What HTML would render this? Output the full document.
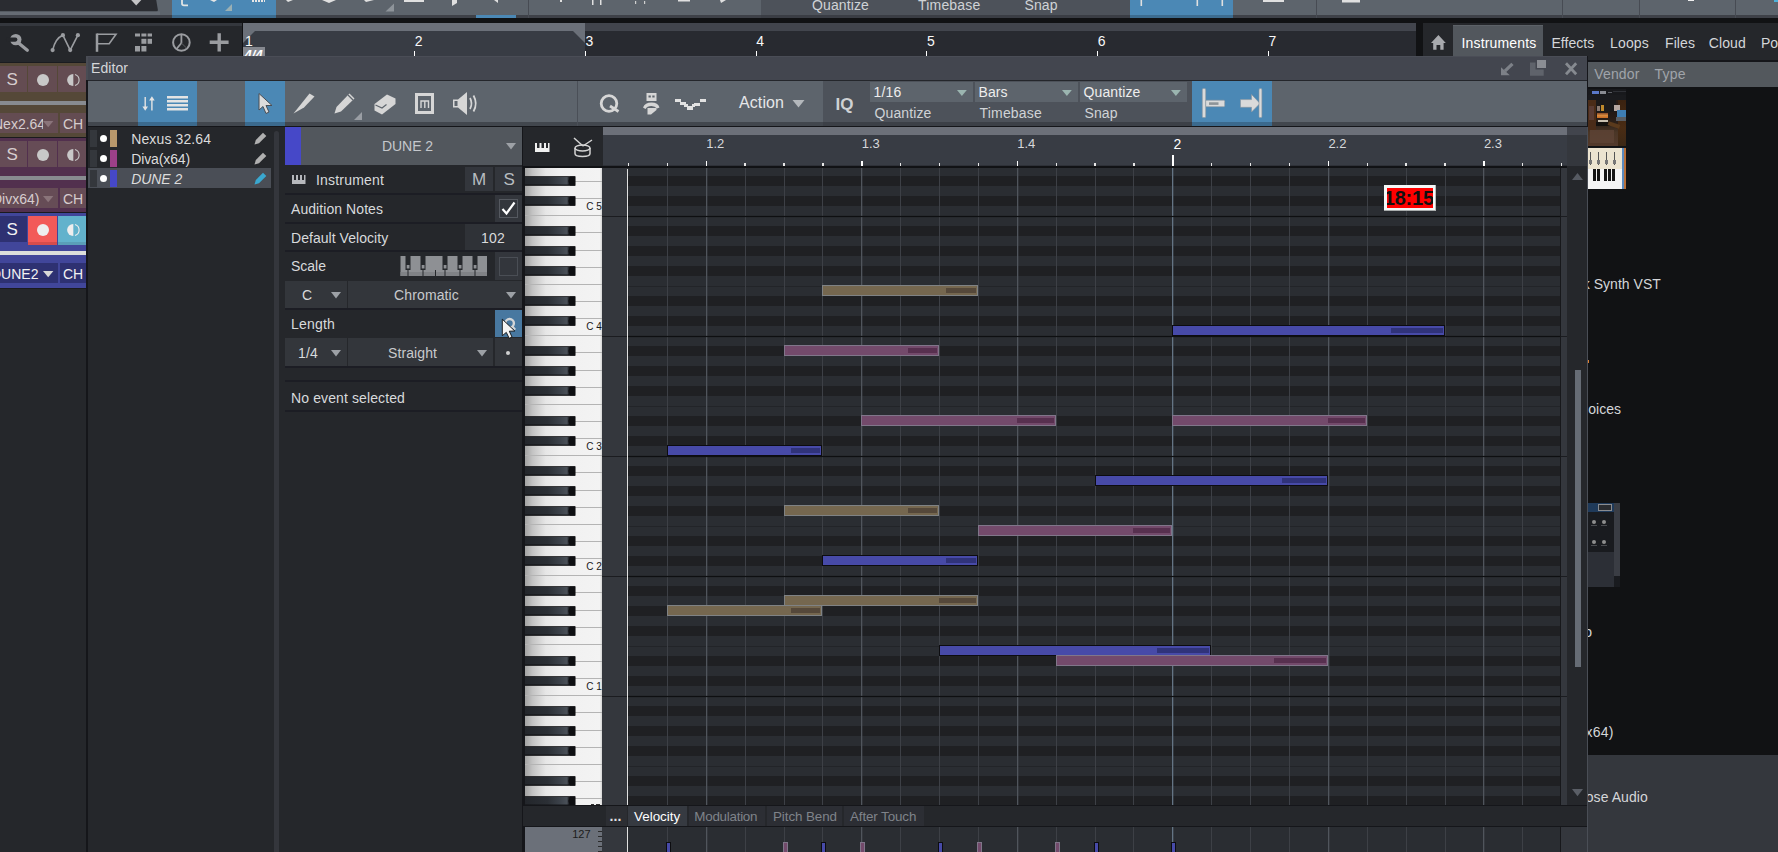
<!DOCTYPE html>
<html><head><meta charset="utf-8"><title>Editor</title><style>
html,body{margin:0;padding:0;background:#25272b;}
body{width:1778px;height:852px;overflow:hidden;position:relative;font-family:"Liberation Sans",sans-serif;}
div{position:absolute;box-sizing:border-box;}
.t{white-space:nowrap;line-height:1;}
svg{position:absolute;overflow:visible;}
</style></head><body>
<!-- top bar -->
<div style="left:0px;top:0px;width:1778px;height:18px;background:#5d646c;"></div><div style="left:0px;top:15px;width:1778px;height:3px;background:#3e4148;"></div><svg style="left:0;top:0" width="170" height="18"><path d="M0 0H156.200L157.900 10Q158 11.500 156 11.500H0Z" fill="#2a2c31"/><path d="M131.200 0H141.300L136.200 5.600Z" fill="#c4c4c6"/><rect x="0" y="11.500" width="160" height="3.500" fill="#666c74"/></svg><div style="left:172px;top:0px;width:104px;height:18px;background:#4b88b5;"></div><div style="left:172px;top:15px;width:104px;height:3px;background:#3c6c90;"></div><svg style="left:172px;top:0" width="110" height="18"><path d="M10 0V3.500Q10 5.300 12 5.300H16" stroke="#e0e4e4" stroke-width="1.800" fill="none"/><path d="M38 0L42 2L45 0Z" fill="#e6e6e6"/><path d="M60 4V11H53Z" fill="#9bb0b4"/><path d="M80 1H93" stroke="#e6e6e6" stroke-width="2" stroke-dasharray="2 1"/></svg><svg style="left:276px;top:0" width="260" height="18"><path d="M10 0L17 0L12 2Z" fill="#e0e0e0"/><path d="M46 0H60L53 3Z" fill="#e0e0e0"/><path d="M88 0H98L90 2Z" fill="#e0e0e0"/><path d="M118 3.500V11.500H109.500Z" fill="#8e949a"/><rect x="128" y="0" width="20" height="2" fill="#e0e0e0"/><path d="M176 0V6L181 3V0Z" fill="#e0e0e0"/><path d="M218 0L222 3V0Z" fill="#e0e0e0"/></svg><div style="left:476px;top:15px;width:40px;height:3px;background:#4b88b5;"></div><div style="left:528px;top:0px;width:1px;height:18px;background:#474b53;"></div><svg style="left:530px;top:0" width="240" height="18"><rect x="30" y="0" width="2" height="2" fill="#e0e0e0"/><rect x="62" y="0" width="1.5" height="5" fill="#e0e0e0"/><rect x="70" y="0" width="1.5" height="5" fill="#e0e0e0"/><rect x="105" y="1" width="1.2" height="3" fill="#d0d0d0"/><rect x="114" y="1" width="1.2" height="3" fill="#d0d0d0"/><rect x="148" y="0" width="12" height="1.5" fill="#e0e0e0"/><path d="M190 0H196L191 3Z" fill="#e0e0e0"/></svg><div style="left:761px;top:0px;width:369px;height:18px;background:#4d525a;"></div><div style="left:761px;top:15px;width:369px;height:3px;background:#3a3d44;"></div><div class="t" style="left:812px;top:-2.2px;font-size:14px;color:#d0d3d6;letter-spacing:0.121px;">Quantize</div><div class="t" style="left:918px;top:-2.2px;font-size:14px;color:#d0d3d6;letter-spacing:0.191px;">Timebase</div><div class="t" style="left:1024.5px;top:-2.2px;font-size:14px;color:#d0d3d6;letter-spacing:0.076px;">Snap</div><div style="left:1130px;top:0px;width:103px;height:18px;background:#4b88b5;"></div><div style="left:1130px;top:15px;width:103px;height:3px;background:#3c6c90;"></div><svg style="left:1130px;top:0" width="110" height="18"><rect x="10.5" y="0" width="1.6" height="6" fill="#e0e0e0"/><rect x="66.5" y="0" width="1.6" height="6" fill="#e0e0e0"/><rect x="91.5" y="0" width="1.6" height="6" fill="#e0e0e0"/></svg><svg style="left:1233px;top:0" width="140" height="18"><rect x="30" y="0" width="21" height="2" fill="#e0e0e0"/><rect x="109" y="0" width="18" height="2.5" fill="#e0e0e0"/></svg><div style="left:1316px;top:0px;width:1px;height:18px;background:#474b53;"></div><div style="left:1562px;top:0px;width:1px;height:18px;background:#474b53;"></div><div style="left:1639px;top:0px;width:1px;height:18px;background:#474b53;"></div><div style="left:1735px;top:0px;width:1px;height:18px;background:#474b53;"></div><div style="left:1688px;top:0px;width:5.5px;height:1px;background:#f0f0f0;"></div><div style="left:1774px;top:0px;width:4px;height:2px;background:#4fb0d8;"></div><div style="left:0px;top:18px;width:1778px;height:5px;background:#111214;"></div>
<!-- left tool strip -->
<div style="left:0px;top:23px;width:243px;height:40px;background:#25272b;"></div><div style="left:242px;top:23px;width:1px;height:34px;background:#111214;"></div><div style="left:0px;top:23px;width:242px;height:2.5px;background:#34373d;"></div><svg style="left:0;top:23px" width="243" height="40" fill="none" stroke="#9a9ca0">
<circle cx="15.800" cy="16.600" r="5.700" fill="#9a9ca0" stroke="none"/>
<path d="M8 16.600H15.300" stroke="#25272b" stroke-width="4.200" stroke-linecap="round"/>
<path d="M18.800 20.300L27.300 27.200" stroke-width="3.300" stroke-linecap="round"/>
<path d="M52.600 27.100Q55.500 15 62.900 12.200L70.200 27.100L77.900 12.200" stroke-width="1.600"/>
<circle cx="52.600" cy="27.100" r="2.100" fill="#9a9ca0" stroke="none"/><circle cx="62.900" cy="12.200" r="2.100" fill="#9a9ca0" stroke="none"/><circle cx="70.200" cy="27.100" r="2.100" fill="#9a9ca0" stroke="none"/><circle cx="77.900" cy="12.200" r="2.100" fill="#9a9ca0" stroke="none"/>
<path d="M97 10.500V28.800" stroke-width="2.500"/><path d="M97 11.300H116L109.200 20.800H97" stroke-width="1.600"/>
<g stroke="none" fill="#9a9ca0"><rect x="135" y="10.500" width="5" height="3"/><rect x="141.400" y="10.500" width="5" height="3"/><rect x="147.600" y="10.500" width="4.400" height="3"/><rect x="141.400" y="15.800" width="5" height="5"/><rect x="147.600" y="15.800" width="4.400" height="5"/><rect x="135" y="23" width="5" height="5.500"/><rect x="141.400" y="23" width="5" height="5.500"/></g>
<circle cx="181.400" cy="19.500" r="8.300" stroke-width="2"/><path d="M181.400 11V20" stroke-width="1.800"/><path d="M181.400 20L176.500 26" stroke-width="1.800"/><path d="M181.400 20L186.500 25" stroke-width="0.800" stroke="#6a6c70"/>
<path d="M209.700 19.300H228.600M219.200 10.200V28.500" stroke-width="3.400"/>
</svg>
<!-- ruler -->
<div style="left:243px;top:23px;width:1173px;height:34px;background:#282a30;"></div><div style="left:243px;top:23px;width:1173px;height:8px;background:#42454d;"></div><div style="left:243px;top:31px;width:342px;height:25px;background:#383c44;"></div><div style="left:243px;top:23px;width:342px;height:8px;background:#6b7079;"></div><svg style="left:243px;top:23px" width="1173" height="34"><path d="M0 8H12L0 20Z" fill="#6b7079"/><path d="M330 8H342V20Z" fill="#6b7079"/></svg><div class="t" style="left:244.9px;top:34px;font-size:14px;color:#f8f8f8;">1</div><div style="left:414px;top:51px;width:1px;height:5px;background:#ffffff;"></div><div class="t" style="left:414.85px;top:34px;font-size:14px;color:#f8f8f8;">2</div><div style="left:585px;top:51px;width:1px;height:5px;background:#ffffff;"></div><div class="t" style="left:585.5999999999999px;top:34px;font-size:14px;color:#f8f8f8;">3</div><div style="left:756px;top:51px;width:1px;height:5px;background:#ffffff;"></div><div class="t" style="left:756.3499999999999px;top:34px;font-size:14px;color:#f8f8f8;">4</div><div style="left:926px;top:51px;width:1px;height:5px;background:#ffffff;"></div><div class="t" style="left:927.0999999999999px;top:34px;font-size:14px;color:#f8f8f8;">5</div><div style="left:1097px;top:51px;width:1px;height:5px;background:#ffffff;"></div><div class="t" style="left:1097.85px;top:34px;font-size:14px;color:#f8f8f8;">6</div><div style="left:1268px;top:51px;width:1px;height:5px;background:#ffffff;"></div><div class="t" style="left:1268.6px;top:34px;font-size:14px;color:#f8f8f8;">7</div><div style="left:243px;top:46.9px;width:22.1px;height:9.3px;background:#85888f;overflow:hidden;"><div class="t" style="left:1.600px;top:1.200px;font-size:13px;color:#fff;font-style:italic;font-weight:bold">4/4</div></div><div style="left:1416px;top:23px;width:7px;height:40px;background:#111214;"></div>
<!-- browser -->
<div style="left:1423px;top:23px;width:355px;height:40px;background:#25272b;"></div><div style="left:1453px;top:25px;width:90px;height:38px;background:#52575d;"></div><div style="left:1453px;top:25px;width:90px;height:1px;background:#5d6268;"></div><svg style="left:1431px;top:35px" width="15" height="15"><path d="M7.400 0L14.800 8H12.600V14.800H9.300V10H5.500V14.800H2.200V8H0Z" fill="#a8aaae"/></svg><div class="t" style="left:1461.5px;top:36px;font-size:14px;color:#ffffff;letter-spacing:0.169px;">Instruments</div><div class="t" style="left:1551.5px;top:36px;font-size:14px;color:#d4d6d9;letter-spacing:0.030px;">Effects</div><div class="t" style="left:1610px;top:36px;font-size:14px;color:#d4d6d9;letter-spacing:0.171px;">Loops</div><div class="t" style="left:1665px;top:36px;font-size:14px;color:#d4d6d9;letter-spacing:0.088px;">Files</div><div class="t" style="left:1708.8px;top:36px;font-size:14px;color:#d4d6d9;letter-spacing:0.084px;">Cloud</div><div class="t" style="left:1761px;top:36px;font-size:14px;color:#d4d6d9;letter-spacing:-0.062px;">Po</div><div style="left:1423px;top:60px;width:355px;height:2px;background:#15161a;"></div><div style="left:1423px;top:62px;width:355px;height:25px;background:#53585d;"></div><div class="t" style="left:1594.3px;top:67px;font-size:14px;color:#a0a4aa;letter-spacing:0.143px;">Vendor</div><div class="t" style="left:1654.5px;top:67px;font-size:14px;color:#a0a4aa;letter-spacing:0.219px;">Type</div><div style="left:1423px;top:87px;width:355px;height:668px;background:#111214;"></div><div style="left:1423px;top:755px;width:355px;height:97px;background:#34373d;"></div><div class="t" style="left:1582.8px;top:277.2px;font-size:14px;color:#d4d6d9;letter-spacing:0.018px;">k Synth VST</div><div class="t" style="left:1588.2px;top:402.2px;font-size:14px;color:#d4d6d9;letter-spacing:0.063px;">oices</div><div class="t" style="left:1584.3px;top:625.2px;font-size:14px;color:#d4d6d9;letter-spacing:0.214px;">o</div><div class="t" style="left:1585.5px;top:725px;font-size:14px;color:#d4d6d9;letter-spacing:0.191px;">x64)</div><div class="t" style="left:1585.7px;top:790px;font-size:14px;color:#d4d6d9;letter-spacing:0.081px;">ose Audio</div><div style="left:1588px;top:89.4px;width:38px;height:6px;background:#18191c;"></div><div style="left:1591.8px;top:91px;width:7.2px;height:2.6px;background:#5a78c8;"></div><div style="left:1600px;top:91px;width:5.5px;height:2.6px;background:#8a8c92;"></div><div style="left:1608px;top:92px;width:4px;height:1px;background:#5a5c62;"></div><div style="left:1613px;top:90.6px;width:13px;height:1.8px;background:#2e3035;"></div><div style="left:1588px;top:95.4px;width:38px;height:51px;background:#1a1b1e;"></div><div style="left:1588px;top:99.5px;width:37.6px;height:46.2px;background:linear-gradient(180deg,#2a1c14 0%,#241a16 30%,#2c2018 50%,#4a3626 70%,#543a2c 100%);"></div><div style="left:1588px;top:99.5px;width:8px;height:30px;background:#4a2c18;"></div><div style="left:1589px;top:106px;width:4.5px;height:14px;background:#5a3c34;"></div><div style="left:1618px;top:99.5px;width:7.6px;height:46px;background:linear-gradient(180deg,#3a2210 0%,#4a2c14 60%,#3c2816 100%);"></div><div style="left:1596px;top:100px;width:20px;height:12px;background:#1c1a1a;"></div><div style="left:1597.3px;top:105.5px;width:3px;height:5.5px;background:#8a7a72;"></div><div style="left:1601px;top:105px;width:3.2px;height:6px;background:#c08a2c;"></div><div style="left:1614.3px;top:104.5px;width:6px;height:6.5px;background:#b8a8a0;"></div><div style="left:1597px;top:112.5px;width:10.5px;height:5px;background:linear-gradient(180deg,#8a4a2a 0%,#d88a3c 50%,#c86a24 100%);"></div><div style="left:1597.8px;top:119.5px;width:10px;height:2px;background:#c8c0b0;"></div><div style="left:1596px;top:121.5px;width:14px;height:4px;background:#14120f;"></div><div style="left:1617px;top:110px;width:8.5px;height:6.5px;background:#3e7eb4;"></div><div style="left:1616px;top:117px;width:9.5px;height:3.5px;background:#5a5e64;"></div><div style="left:1608px;top:123px;width:12px;height:3.5px;background:#5a3a1c;transform:rotate(18deg);"></div><div style="left:1590px;top:130px;width:24px;height:13px;background:#5e4436;opacity:0.800;"></div><div style="left:1588px;top:146.5px;width:38px;height:2px;background:#16171a;"></div><div style="left:1588px;top:148px;width:34px;height:21px;background:#ece4d0;"></div><div style="left:1622px;top:148px;width:2px;height:41px;background:#5a8ac0;"></div><div style="left:1624px;top:148px;width:2px;height:41px;background:#b8703a;"></div><div style="left:1590px;top:152px;width:1px;height:13px;background:#555;"></div><div style="left:1589px;top:160px;width:3px;height:4px;background:#777;"></div><div style="left:1598px;top:152px;width:1px;height:13px;background:#555;"></div><div style="left:1597px;top:160px;width:3px;height:4px;background:#777;"></div><div style="left:1606px;top:152px;width:1px;height:13px;background:#555;"></div><div style="left:1605px;top:160px;width:3px;height:4px;background:#777;"></div><div style="left:1614px;top:152px;width:1px;height:13px;background:#555;"></div><div style="left:1613px;top:160px;width:3px;height:4px;background:#777;"></div><div style="left:1588px;top:169px;width:34px;height:20px;background:#f4f4f4;"></div><div style="left:1593px;top:169px;width:3px;height:12px;background:#151515;"></div><div style="left:1597px;top:169px;width:3px;height:12px;background:#151515;"></div><div style="left:1604px;top:169px;width:3px;height:12px;background:#151515;"></div><div style="left:1608px;top:169px;width:3px;height:12px;background:#151515;"></div><div style="left:1612px;top:169px;width:3px;height:12px;background:#151515;"></div><div style="left:1588px;top:503px;width:32px;height:84px;background:#191b1f;"></div><div style="left:1588px;top:503px;width:26px;height:9px;background:#1f3a5a;"></div><div style="left:1598px;top:504px;width:14px;height:7px;background:#2a2c30;border:1px solid #8a8c90;"></div><div style="left:1614px;top:503px;width:6px;height:73px;background:#3a3d44;"></div><div style="left:1588px;top:552px;width:26px;height:35px;background:#2c2f36;"></div><div style="left:1592px;top:520px;width:3.5px;height:3.5px;background:#8e8e8e;border-radius:2px;"></div><div style="left:1591px;top:525px;width:6px;height:1px;background:#4a4c50;"></div><div style="left:1602px;top:520px;width:3.5px;height:3.5px;background:#8e8e8e;border-radius:2px;"></div><div style="left:1601px;top:525px;width:6px;height:1px;background:#4a4c50;"></div><div style="left:1592px;top:540px;width:3.5px;height:3.5px;background:#8e8e8e;border-radius:2px;"></div><div style="left:1591px;top:545px;width:6px;height:1px;background:#4a4c50;"></div><div style="left:1602px;top:540px;width:3.5px;height:3.5px;background:#8e8e8e;border-radius:2px;"></div><div style="left:1601px;top:545px;width:6px;height:1px;background:#4a4c50;"></div><div style="left:1588px;top:360px;width:1px;height:3px;background:#e08030;"></div>
<!-- tracks -->
<div style="left:0px;top:62px;width:87px;height:1px;background:#1b1c20;"></div><div style="left:0px;top:63px;width:86px;height:74.5px;background:#554838;"></div><div style="left:0px;top:66px;width:27px;height:26px;background:#644c52;"></div><div style="left:28px;top:66px;width:29px;height:26px;background:#644c52;"></div><div style="left:58px;top:66px;width:28px;height:26px;background:#644c52;"></div><div class="t" style="left:6.5px;top:71.4px;font-size:17px;color:#d6cdce;letter-spacing:-0.339px;">S</div><div style="left:37px;top:74px;width:12px;height:12px;background:#c8c8c8;border-radius:6px;"></div><svg style="left:66.500px;top:74px" width="13" height="12"><path d="M6.300 0A6.200 6 0 0 0 6.300 12Z" fill="#c8c8c8"/><path d="M8 0.500A6 5.800 0 0 1 8 11.500" fill="none" stroke="#c8c8c8" stroke-width="1.100"/></svg><div style="left:0px;top:101px;width:86px;height:4px;background:#888b90;"></div><div style="left:0px;top:113px;width:58px;height:20px;background:#644c52;overflow:hidden;"><div class="t" style="left:-7px;top:4.100px;font-size:14px;color:#d6cdce;width:49.5px;overflow:hidden;">Nex2.64</div></div><div style="left:60px;top:113px;width:26px;height:20px;background:#644c52;"></div><svg style="left:42.500px;top:121px" width="11" height="7"><path d="M0 0H10.400L5.200 6.200Z" fill="#8a747a"/></svg><div class="t" style="left:63px;top:117.1px;font-size:14px;color:#d6cdce;letter-spacing:-0.110px;">CH</div><div style="left:0px;top:138px;width:86px;height:74.5px;background:#52304e;"></div><div style="left:0px;top:141px;width:27px;height:26px;background:#664c56;"></div><div style="left:28px;top:141px;width:29px;height:26px;background:#664c56;"></div><div style="left:58px;top:141px;width:28px;height:26px;background:#664c56;"></div><div class="t" style="left:6.5px;top:146.4px;font-size:17px;color:#d6cdce;letter-spacing:-0.339px;">S</div><div style="left:37px;top:149px;width:12px;height:12px;background:#c8c8c8;border-radius:6px;"></div><svg style="left:66.500px;top:149px" width="13" height="12"><path d="M6.300 0A6.200 6 0 0 0 6.300 12Z" fill="#c8c8c8"/><path d="M8 0.500A6 5.800 0 0 1 8 11.500" fill="none" stroke="#c8c8c8" stroke-width="1.100"/></svg><div style="left:0px;top:176px;width:86px;height:4px;background:#888b90;"></div><div style="left:0px;top:188px;width:58px;height:20px;background:#664c56;overflow:hidden;"><div class="t" style="left:-8px;top:4.100px;font-size:14px;color:#d6cdce;width:50.5px;overflow:hidden;">Divx64)</div></div><div style="left:60px;top:188px;width:26px;height:20px;background:#664c56;"></div><svg style="left:42.500px;top:196px" width="11" height="7"><path d="M0 0H10.400L5.200 6.200Z" fill="#8a747a"/></svg><div class="t" style="left:63px;top:192.1px;font-size:14px;color:#d6cdce;letter-spacing:-0.110px;">CH</div><div style="left:0px;top:213px;width:86px;height:74.5px;background:#41469a;"></div><div style="left:0px;top:216px;width:27px;height:26px;background:#2e3172;"></div><div style="left:28px;top:216px;width:29px;height:29px;background:#f25a58;"></div><div style="left:58px;top:216px;width:28px;height:29px;background:#62b2cc;"></div><div style="left:28px;top:242px;width:29px;height:3px;background:#d64c4c;"></div><div style="left:58px;top:242px;width:28px;height:3px;background:#5a9eb8;"></div><div class="t" style="left:6.5px;top:221.4px;font-size:17px;color:#f2f2f2;letter-spacing:-0.339px;">S</div><div style="left:37px;top:224px;width:12px;height:12px;background:#eeeeee;border-radius:6px;"></div><svg style="left:66.500px;top:224px" width="13" height="12"><path d="M6.300 0A6.200 6 0 0 0 6.300 12Z" fill="#eeeeee"/><path d="M8 0.500A6 5.800 0 0 1 8 11.500" fill="none" stroke="#eeeeee" stroke-width="1.100"/></svg><div style="left:0px;top:251px;width:86px;height:4px;background:#dcdedc;"></div><div style="left:0px;top:263px;width:58px;height:20px;background:#2e3172;overflow:hidden;"><div class="t" style="left:-9px;top:4.100px;font-size:14px;color:#f2f2f2;width:51.5px;overflow:hidden;">DUNE2</div></div><div style="left:60px;top:263px;width:26px;height:20px;background:#2e3172;"></div><svg style="left:42.500px;top:271px" width="11" height="7"><path d="M0 0H10.400L5.200 6.200Z" fill="#d8d8d8"/></svg><div class="t" style="left:63px;top:267.1px;font-size:14px;color:#f2f2f2;letter-spacing:-0.110px;">CH</div><div style="left:0px;top:137px;width:86px;height:1px;background:#1a1a1e;"></div><div style="left:0px;top:212px;width:86px;height:1px;background:#1a1a1e;"></div><div style="left:0px;top:287.5px;width:86px;height:1px;background:#1a1a1e;"></div><div style="left:0px;top:288.5px;width:87px;height:564px;background:#25272b;"></div>
<!-- editor window -->
<div style="left:86px;top:56px;width:1502px;height:796px;background:#15161a;"></div><div style="left:88px;top:56px;width:1499px;height:24px;background:#43464f;"></div><div style="left:88px;top:56px;width:1499px;height:1px;background:#4a4d56;"></div><div style="left:86px;top:56px;width:2px;height:24px;background:#494c54;"></div><div class="t" style="left:91px;top:61.2px;font-size:14px;color:#d5d7da;letter-spacing:0.071px;">Editor</div><svg style="left:1500px;top:60px" width="80" height="18"><path d="M11.300 2.700L13.600 5L6 12.300L3.700 10Z" fill="#7d8188"/><path d="M1 7.300V15.200H9.800Z" fill="#7d8188"/><rect x="37" y="0" width="9" height="8" fill="#8a8d93"/><path d="M30 2.500H35.500V9.500H43.700V15.700H30Z" fill="#5f636b"/><path d="M66 3.300L76.200 14.200M76.200 3.300L66 14.200" stroke="#868a90" stroke-width="2.800"/></svg><div style="left:88px;top:80px;width:1499px;height:1px;background:#24262b;"></div><div style="left:88px;top:81px;width:1499px;height:42px;background:#5d646c;"></div><div style="left:88px;top:122px;width:1499px;height:4px;background:#42474e;"></div><div style="left:88px;top:126px;width:1499px;height:1px;background:#15161a;"></div><div style="left:138px;top:81px;width:59px;height:42px;background:#4b88b5;"></div><div style="left:138px;top:122px;width:59px;height:4px;background:#3b6a8e;"></div><div style="left:245px;top:81px;width:40px;height:42px;background:#4b88b5;"></div><div style="left:245px;top:122px;width:40px;height:4px;background:#3b6a8e;"></div><svg style="left:138px;top:81px" width="60" height="42"><path d="M7.200 16V28M13.900 17V29.500" stroke="#e4e4e4" stroke-width="1.400" fill="none"/><path d="M4.400 25.500H10L7.200 29.800ZM11.100 19.500H16.700L13.900 15.200Z" fill="#e4e4e4"/><g fill="#e4e4e4"><rect x="29" y="15" width="21" height="2.500"/><rect x="29" y="19" width="21" height="2.500"/><rect x="29" y="23" width="21" height="2.500"/><rect x="29" y="27" width="21" height="2.500"/></g></svg><svg style="left:245px;top:81px" width="40" height="42"><path d="M14 12.500V29L18 25.500L21 32.500L24 31L21 24.500H27Z" fill="#dcdcdc" stroke="#4a4e55" stroke-width="1"/></svg><svg style="left:292px;top:90px" width="26" height="26"><path d="M1.500 23.500L17.500 3.500L22.500 6.500L12 17.500Z" fill="#d6d6d6"/></svg><svg style="left:332px;top:90px" width="34" height="32"><path d="M2.500 23.500L4.500 17L17.500 3.500L22.500 8.500L9 21.500Z" fill="#d6d6d6"/><path d="M16 5L21 10" stroke="#5d646c" stroke-width="1.200"/><path d="M30 22V30H22Z" fill="#9a9ea4"/></svg><svg style="left:373px;top:90px" width="26" height="28"><path d="M1.500 14L14 4.500L22.500 8.500V14L9 24.500L1.500 20.500Z" fill="#d6d6d6"/><path d="M2.500 15L9 18L13.500 14.500" stroke="#5d646c" stroke-width="1.200" fill="none"/></svg><div style="left:414.5px;top:92.8px;width:19.5px;height:21.4px;background:transparent;border:3px solid #d6d6d6;"></div><svg style="left:415px;top:93px" width="19" height="21"><path d="M6 15V8H13.500V15M9.800 8V15" stroke="#d6d6d6" stroke-width="1.400" fill="none"/></svg><svg style="left:451px;top:90px" width="28" height="28"><path d="M2 9.500H7L16 2V25L7 17.500H2Z" fill="#d6d6d6"/><rect x="3.500" y="11" width="3" height="5" fill="#5d646c"/><path d="M19 8Q22 13.500 19 19M22.500 5.500Q27 13.500 22.500 21.500" stroke="#d6d6d6" stroke-width="1.800" fill="none"/></svg><div style="left:577px;top:81px;width:1px;height:45px;background:#4a4f57;"></div><svg style="left:599px;top:93px" width="24" height="22"><circle cx="10" cy="10.500" r="7.800" stroke="#d6d6d6" stroke-width="2.800" fill="none"/><path d="M11 13L19.500 18.500" stroke="#d6d6d6" stroke-width="2.800"/></svg><svg style="left:642px;top:92px" width="20" height="24"><rect x="4.500" y="1" width="10" height="8" fill="#d6d6d6"/><rect x="6.500" y="3.500" width="2.300" height="2" fill="#5d646c"/><rect x="10.300" y="3.500" width="2.300" height="2" fill="#5d646c"/><path d="M1 15.500Q3 10.500 9.500 10.500Q16 10.500 17.500 15.500L15 16.500Q13 14 9.500 14Q5 14 3.500 17Z" fill="#d6d6d6"/><path d="M5.500 16H14.500V18L9 22.500H5.500Z" fill="#d6d6d6"/></svg><svg style="left:674px;top:97px" width="34" height="14" fill="#e2e2e2"><rect x="1" y="2" width="6" height="3"/><rect x="6" y="5" width="6" height="3"/><rect x="10" y="7" width="4" height="3"/><rect x="13" y="9" width="6" height="4"/><rect x="18" y="7" width="3" height="3"/><rect x="20" y="6" width="6" height="3"/><rect x="26" y="2" width="6" height="3"/></svg><div class="t" style="left:739px;top:95px;font-size:16px;color:#e6e7e9;letter-spacing:0.089px;">Action</div><svg style="left:792px;top:100px" width="14" height="9"><path d="M0.500 0H12.500L6.500 7.500Z" fill="#b4b8bc"/></svg><div style="left:823px;top:81px;width:369px;height:42px;background:#4d525a;"></div><div style="left:823px;top:122px;width:369px;height:4px;background:#3c4047;"></div><div class="t" style="left:835.5px;top:96px;font-size:17px;color:#cfd1d4;letter-spacing:0.027px;font-weight:bold;">IQ</div><div style="left:870px;top:82px;width:103px;height:20px;background:#5d646c;"></div><div class="t" style="left:873.5px;top:85px;font-size:14px;color:#eeeeee;letter-spacing:0.188px;">1/16</div><svg style="left:957.3px;top:89.800px" width="11" height="7"><path d="M0 0H9.800L4.900 6Z" fill="#9bb5b0"/></svg><div class="t" style="left:874.5px;top:105.7px;font-size:14px;color:#d0d3d6;letter-spacing:0.121px;">Quantize</div><div style="left:975px;top:82px;width:103px;height:20px;background:#5d646c;"></div><div class="t" style="left:978.5px;top:85px;font-size:14px;color:#eeeeee;letter-spacing:0.053px;">Bars</div><svg style="left:1062.3px;top:89.800px" width="11" height="7"><path d="M0 0H9.800L4.900 6Z" fill="#9bb5b0"/></svg><div class="t" style="left:979.5px;top:105.7px;font-size:14px;color:#d0d3d6;letter-spacing:0.191px;">Timebase</div><div style="left:1080px;top:82px;width:107px;height:20px;background:#5d646c;"></div><div class="t" style="left:1083.5px;top:85px;font-size:14px;color:#eeeeee;letter-spacing:0.121px;">Quantize</div><svg style="left:1171.3px;top:89.800px" width="11" height="7"><path d="M0 0H9.800L4.900 6Z" fill="#9bb5b0"/></svg><div class="t" style="left:1084.5px;top:105.7px;font-size:14px;color:#d0d3d6;letter-spacing:0.076px;">Snap</div><div style="left:1192px;top:81px;width:80px;height:42px;background:#4b88b5;"></div><div style="left:1192px;top:122px;width:80px;height:4px;background:#3b6a8e;"></div><svg style="left:1192px;top:81px" width="80" height="42"><rect x="10.300" y="7.600" width="3.400" height="29" rx="1.200" fill="#dadada" stroke="#8a949c" stroke-width="0.600"/><rect x="13.700" y="19.200" width="19" height="6.500" rx="1" fill="#dadada" stroke="#8a949c" stroke-width="0.600"/><rect x="17" y="21.300" width="9.500" height="2.600" fill="#8e9498"/><path d="M48.500 18.600H59.500V13.400L68 22.400L59.500 31V26.300H48.500Z" fill="#dadada" stroke="#8a949c" stroke-width="0.600"/><rect x="67" y="7.600" width="2.900" height="29" rx="1.200" fill="#dadada" stroke="#8a949c" stroke-width="0.600"/></svg><div style="left:88px;top:127px;width:197px;height:725px;background:#25272b;"></div><div style="left:88px;top:168px;width:183px;height:20px;background:#4a4e56;"></div><div style="left:90px;top:130px;width:7px;height:17px;background:#34373c;"></div><div style="left:99.6px;top:134.6px;width:7.8px;height:7.8px;background:#ffffff;border-radius:4px;"></div><div style="left:110px;top:130px;width:7px;height:17px;background:#b8986c;"></div><div class="t" style="left:131.2px;top:132px;font-size:14px;color:#dcdcdc;letter-spacing:0.127px;">Nexus 32.64</div><svg style="left:254px;top:132px" width="13" height="13"><path d="M0.500 12.500L1.800 8L9 0.800L12.300 4L5 11.300Z" fill="#b0b0b0"/></svg><div style="left:90px;top:150px;width:7px;height:17px;background:#34373c;"></div><div style="left:99.6px;top:154.6px;width:7.8px;height:7.8px;background:#ffffff;border-radius:4px;"></div><div style="left:110px;top:150px;width:7px;height:17px;background:#9c4088;"></div><div class="t" style="left:131.2px;top:152px;font-size:14px;color:#dcdcdc;letter-spacing:-0.120px;">Diva(x64)</div><svg style="left:254px;top:152px" width="13" height="13"><path d="M0.500 12.500L1.800 8L9 0.800L12.300 4L5 11.300Z" fill="#b0b0b0"/></svg><div style="left:90px;top:170px;width:7px;height:17px;background:#34373c;"></div><div style="left:99.6px;top:174.6px;width:7.8px;height:7.8px;background:#ffffff;border-radius:4px;"></div><div style="left:110px;top:170px;width:7px;height:17px;background:#4648c8;"></div><div class="t" style="left:131.2px;top:172px;font-size:14px;color:#dcdcdc;letter-spacing:-0.057px;font-style:italic;">DUNE 2</div><svg style="left:254px;top:172px" width="13" height="13"><path d="M0.500 12.500L1.800 8L9 0.800L12.300 4L5 11.300Z" fill="#3aa8d0"/></svg><div style="left:273.5px;top:131px;width:5.5px;height:721px;background:#34363c;border-radius:3px 3px 0 0;"></div><div style="left:285px;top:127px;width:237px;height:725px;background:#25272b;"></div><div style="left:285px;top:127px;width:237px;height:38px;background:#52575d;"></div><div style="left:285px;top:127px;width:16px;height:38px;background:#4648c8;"></div><div class="t" style="left:382px;top:139.1px;font-size:14px;color:#c5c8cc;letter-spacing:-0.057px;">DUNE 2</div><svg style="left:506px;top:143px" width="11" height="7"><path d="M0 0H10L5 6.500Z" fill="#9da1a6"/></svg><svg style="left:292px;top:175px" width="14" height="10"><path d="M0 0H2V5H4V0H6V5H8V0H10V5H12V0H13.500V9H0Z" fill="#b6b8bc"/></svg><div class="t" style="left:316px;top:173px;font-size:14px;color:#d8dadc;letter-spacing:0.186px;">Instrument</div><div style="left:465px;top:166.5px;width:28px;height:24.5px;background:#33363c;"></div><div style="left:495px;top:166.5px;width:27px;height:24.5px;background:#33363c;"></div><div class="t" style="left:472px;top:171.4px;font-size:17px;color:#b8bcc0;letter-spacing:-0.161px;">M</div><div class="t" style="left:503.4px;top:171.4px;font-size:17px;color:#b8bcc0;letter-spacing:-0.339px;">S</div><div style="left:285px;top:193px;width:237px;height:2px;background:#1c1d24;"></div><div class="t" style="left:291px;top:202px;font-size:14px;color:#d8dadc;letter-spacing:0.068px;">Audition Notes</div><div style="left:495px;top:195px;width:27px;height:27px;background:#33363c;"></div><div style="left:499px;top:199px;width:19px;height:19px;background:transparent;border:1px solid #555960;"></div><svg style="left:499px;top:199px" width="19" height="19"><path d="M3.500 10L7.500 14.500L15.500 3.500" stroke="#ffffff" stroke-width="2.200" fill="none"/></svg><div style="left:285px;top:222px;width:237px;height:2px;background:#1c1d24;"></div><div class="t" style="left:291px;top:231px;font-size:14px;color:#d8dadc;letter-spacing:0.046px;">Default Velocity</div><div style="left:465px;top:224px;width:57px;height:26px;background:#2f3237;"></div><div class="t" style="left:481px;top:231px;font-size:14px;color:#d8dadc;letter-spacing:0.214px;">102</div><div style="left:285px;top:250px;width:237px;height:2px;background:#1c1d24;"></div><div class="t" style="left:291px;top:259px;font-size:14px;color:#d8dadc;">Scale</div><svg style="left:400px;top:256px" width="88" height="20"><rect x="0.500" y="0" width="86.500" height="20" fill="#8e9094"/><rect x="0.500" y="16" width="86.500" height="4" fill="#808286"/><rect x="5.5" y="0" width="5" height="14" fill="#25272b"/><rect x="6.7" y="9" width="2.800" height="3.500" fill="#8e9094"/><rect x="20.5" y="0" width="5" height="14" fill="#25272b"/><rect x="21.7" y="9" width="2.800" height="3.500" fill="#8e9094"/><rect x="42.5" y="0" width="5" height="14" fill="#25272b"/><rect x="43.7" y="9" width="2.800" height="3.500" fill="#8e9094"/><rect x="57.5" y="0" width="5" height="14" fill="#25272b"/><rect x="58.7" y="9" width="2.800" height="3.500" fill="#8e9094"/><rect x="72.5" y="0" width="5" height="14" fill="#25272b"/><rect x="73.7" y="9" width="2.800" height="3.500" fill="#8e9094"/><rect x="7.5" y="14" width="1" height="6" fill="#25272b"/><rect x="22.5" y="14" width="1" height="6" fill="#25272b"/><rect x="35.0" y="14" width="1" height="6" fill="#25272b"/><rect x="44.5" y="14" width="1" height="6" fill="#25272b"/><rect x="59.5" y="14" width="1" height="6" fill="#25272b"/><rect x="74.5" y="14" width="1" height="6" fill="#25272b"/></svg><div style="left:495px;top:252px;width:27px;height:28px;background:#33363c;"></div><div style="left:499px;top:257px;width:19px;height:19px;background:transparent;border:1px solid #4a4e55;"></div><div style="left:285px;top:281px;width:62px;height:27px;background:#33363b;"></div><div style="left:348px;top:281px;width:174px;height:27px;background:#33363b;"></div><div class="t" style="left:302px;top:288px;font-size:14px;color:#d8dadc;letter-spacing:-0.110px;">C</div><div class="t" style="left:394px;top:288px;font-size:14px;color:#c8cacd;letter-spacing:0.134px;">Chromatic</div><svg style="left:331px;top:292px" width="11" height="7"><path d="M0 0H10L5 6.500Z" fill="#9da1a6"/></svg><svg style="left:506px;top:292px" width="11" height="7"><path d="M0 0H10L5 6.500Z" fill="#9da1a6"/></svg><div style="left:285px;top:308px;width:237px;height:2px;background:#1c1d24;"></div><div class="t" style="left:291px;top:317px;font-size:14px;color:#d8dadc;letter-spacing:0.197px;">Length</div><div style="left:495px;top:310px;width:27px;height:27px;background:#4878a0;"></div><div style="left:285px;top:338px;width:62px;height:28px;background:#33363b;"></div><div style="left:348px;top:338px;width:145px;height:28px;background:#33363b;"></div><div style="left:495px;top:338px;width:27px;height:28px;background:#33363b;"></div><div class="t" style="left:298px;top:346px;font-size:14px;color:#d8dadc;letter-spacing:0.179px;">1/4</div><div class="t" style="left:388px;top:346px;font-size:14px;color:#c8cacd;letter-spacing:0.094px;">Straight</div><svg style="left:331px;top:350px" width="11" height="7"><path d="M0 0H10L5 6.500Z" fill="#9da1a6"/></svg><svg style="left:477px;top:350px" width="11" height="7"><path d="M0 0H10L5 6.500Z" fill="#9da1a6"/></svg><div style="left:506px;top:351px;width:4px;height:4px;background:#d0d0d0;border-radius:2px;"></div><div style="left:285px;top:366px;width:237px;height:2px;background:#1c1d24;"></div><div style="left:285px;top:380px;width:237px;height:2px;background:#1c1d24;"></div><div class="t" style="left:291px;top:391px;font-size:14px;color:#d8dadc;letter-spacing:0.114px;">No event selected</div><div style="left:285px;top:410px;width:237px;height:2px;background:#1c1d24;"></div><svg style="left:0;top:0" width="540" height="345"><circle cx="509.600" cy="323.300" r="4.300" stroke="#d4d6d8" stroke-width="2.400" fill="none"/><path d="M512.500 326.500L515.300 329.600" stroke="#d4d6d8" stroke-width="1.900"/><path d="M502.300 319.200V335.700L506.300 332.400L509.200 338.300L512 337L509.300 331.200L514.800 331Z" fill="#f4f4f4" stroke="#0c0c0c" stroke-width="0.900"/></svg>
<!-- piano roll -->
<div style="left:523px;top:127px;width:80px;height:39px;background:#25272b;"></div><svg style="left:535px;top:143px" width="15" height="10"><path d="M0 0H2V5H4.500V0H6.500V5H9V0H11V5H13V0H14.500V9H0Z" fill="#f0f0f0"/></svg><svg style="left:572px;top:136px" width="22" height="22" fill="none" stroke="#d4d4d4" stroke-width="1.500"><path d="M2 2L11 10M20 4L11 10"/><ellipse cx="10.500" cy="12" rx="7.500" ry="3"/><path d="M3 12V17.500Q3 20.500 10.500 20.500Q18 20.500 18 17.500V12"/></svg><div style="left:603px;top:127px;width:984px;height:39px;background:#383c44;"></div><div style="left:603px;top:127px;width:964px;height:8px;background:#6c7079;"></div><div style="left:1567px;top:127px;width:20px;height:8px;background:#42454d;"></div><div style="left:1567px;top:135px;width:20px;height:31px;background:#34373d;"></div><div style="left:523px;top:166px;width:1064px;height:2.6px;background:#111215;"></div><div style="left:603px;top:165px;width:964px;height:1px;background:#2e3138;"></div><div style="left:627.8399999999999px;top:163px;width:1.4px;height:3px;background:#e8e8e8;"></div><div style="left:666.7199999999999px;top:163px;width:1.4px;height:3px;background:#e8e8e8;"></div><div style="left:705.5999999999999px;top:161px;width:1.5px;height:5px;background:#ffffff;"></div><div class="t" style="left:706.3px;top:137.2px;font-size:13px;color:#d6d8db;letter-spacing:-0.024px;">1.2</div><div style="left:744.4799999999999px;top:163px;width:1.4px;height:3px;background:#e8e8e8;"></div><div style="left:783.3599999999999px;top:163px;width:1.4px;height:3px;background:#e8e8e8;"></div><div style="left:822.2399999999999px;top:163px;width:1.4px;height:3px;background:#e8e8e8;"></div><div style="left:861.1199999999999px;top:161px;width:1.5px;height:5px;background:#ffffff;"></div><div class="t" style="left:861.8199999999999px;top:137.2px;font-size:13px;color:#d6d8db;letter-spacing:-0.024px;">1.3</div><div style="left:899.9999999999999px;top:163px;width:1.4px;height:3px;background:#e8e8e8;"></div><div style="left:938.8799999999999px;top:163px;width:1.4px;height:3px;background:#e8e8e8;"></div><div style="left:977.76px;top:163px;width:1.4px;height:3px;background:#e8e8e8;"></div><div style="left:1016.6399999999999px;top:161px;width:1.5px;height:5px;background:#ffffff;"></div><div class="t" style="left:1017.3399999999999px;top:137.2px;font-size:13px;color:#d6d8db;letter-spacing:-0.024px;">1.4</div><div style="left:1055.52px;top:163px;width:1.4px;height:3px;background:#e8e8e8;"></div><div style="left:1094.3999999999999px;top:163px;width:1.4px;height:3px;background:#e8e8e8;"></div><div style="left:1133.28px;top:163px;width:1.4px;height:3px;background:#e8e8e8;"></div><div style="left:1172.16px;top:155px;width:1.4px;height:11px;background:#ffffff;"></div><div class="t" style="left:1173.46px;top:137.2px;font-size:14px;color:#ffffff;letter-spacing:0.214px;">2</div><div style="left:1211.04px;top:163px;width:1.4px;height:3px;background:#e8e8e8;"></div><div style="left:1249.9199999999998px;top:163px;width:1.4px;height:3px;background:#e8e8e8;"></div><div style="left:1288.8px;top:163px;width:1.4px;height:3px;background:#e8e8e8;"></div><div style="left:1327.68px;top:161px;width:1.5px;height:5px;background:#ffffff;"></div><div class="t" style="left:1328.38px;top:137.2px;font-size:13px;color:#d6d8db;letter-spacing:-0.024px;">2.2</div><div style="left:1366.56px;top:163px;width:1.4px;height:3px;background:#e8e8e8;"></div><div style="left:1405.4399999999998px;top:163px;width:1.4px;height:3px;background:#e8e8e8;"></div><div style="left:1444.32px;top:163px;width:1.4px;height:3px;background:#e8e8e8;"></div><div style="left:1483.2px;top:161px;width:1.5px;height:5px;background:#ffffff;"></div><div class="t" style="left:1483.9px;top:137.2px;font-size:13px;color:#d6d8db;letter-spacing:-0.024px;">2.3</div><div style="left:1522.08px;top:163px;width:1.4px;height:3px;background:#e8e8e8;"></div><div style="left:1560.9599999999998px;top:163px;width:1.4px;height:3px;background:#e8e8e8;"></div><svg style="left:525px;top:168px" width="77" height="637"><defs><linearGradient id="wk" x1="0" x2="1" y1="0" y2="0"><stop offset="0" stop-color="#a2a2a2"/><stop offset="0.100" stop-color="#c4c4c4"/><stop offset="0.270" stop-color="#e6e6e6"/><stop offset="0.450" stop-color="#f0f0f0"/><stop offset="0.970" stop-color="#f3f3f3"/><stop offset="1" stop-color="#d4d4d4"/></linearGradient><linearGradient id="bk" x1="0" x2="1" y1="0" y2="0"><stop offset="0" stop-color="#23262b"/><stop offset="0.450" stop-color="#2b2f35"/><stop offset="0.700" stop-color="#3c424a"/><stop offset="0.840" stop-color="#4a5058"/><stop offset="0.880" stop-color="#1a1c20"/><stop offset="1" stop-color="#0e0f12"/></linearGradient></defs><rect x="0" y="0" width="77" height="637" fill="url(#wk)"/><rect x="0" y="13" width="77" height="1" fill="#b4b4b4"/><rect x="0" y="30" width="77" height="1" fill="#b4b4b4"/><rect x="0" y="47" width="77" height="1" fill="#b4b4b4"/><rect x="0" y="64" width="77" height="1" fill="#b4b4b4"/><rect x="0" y="82" width="77" height="1" fill="#b4b4b4"/><rect x="0" y="99" width="77" height="1" fill="#b4b4b4"/><rect x="0" y="116" width="77" height="1" fill="#b4b4b4"/><rect x="0" y="133" width="77" height="1" fill="#b4b4b4"/><rect x="0" y="150" width="77" height="1" fill="#b4b4b4"/><rect x="0" y="167" width="77" height="1" fill="#b4b4b4"/><rect x="0" y="184" width="77" height="1" fill="#b4b4b4"/><rect x="0" y="202" width="77" height="1" fill="#b4b4b4"/><rect x="0" y="219" width="77" height="1" fill="#b4b4b4"/><rect x="0" y="236" width="77" height="1" fill="#b4b4b4"/><rect x="0" y="253" width="77" height="1" fill="#b4b4b4"/><rect x="0" y="270" width="77" height="1" fill="#b4b4b4"/><rect x="0" y="287" width="77" height="1" fill="#b4b4b4"/><rect x="0" y="304" width="77" height="1" fill="#b4b4b4"/><rect x="0" y="322" width="77" height="1" fill="#b4b4b4"/><rect x="0" y="339" width="77" height="1" fill="#b4b4b4"/><rect x="0" y="356" width="77" height="1" fill="#b4b4b4"/><rect x="0" y="373" width="77" height="1" fill="#b4b4b4"/><rect x="0" y="390" width="77" height="1" fill="#b4b4b4"/><rect x="0" y="407" width="77" height="1" fill="#b4b4b4"/><rect x="0" y="424" width="77" height="1" fill="#b4b4b4"/><rect x="0" y="442" width="77" height="1" fill="#b4b4b4"/><rect x="0" y="459" width="77" height="1" fill="#b4b4b4"/><rect x="0" y="476" width="77" height="1" fill="#b4b4b4"/><rect x="0" y="493" width="77" height="1" fill="#b4b4b4"/><rect x="0" y="510" width="77" height="1" fill="#b4b4b4"/><rect x="0" y="527" width="77" height="1" fill="#b4b4b4"/><rect x="0" y="544" width="77" height="1" fill="#b4b4b4"/><rect x="0" y="562" width="77" height="1" fill="#b4b4b4"/><rect x="0" y="579" width="77" height="1" fill="#b4b4b4"/><rect x="0" y="596" width="77" height="1" fill="#b4b4b4"/><rect x="0" y="613" width="77" height="1" fill="#b4b4b4"/><rect x="0" y="630" width="77" height="1" fill="#b4b4b4"/><rect x="0" y="8.2" width="50.300" height="9.600" fill="#0b0b0d"/><rect x="0" y="9" width="50" height="7.600" fill="url(#bk)"/><path d="M50.300 8.5V17.5H45L43.300 13L45 8.5Z" fill="#0e0f12"/><rect x="0" y="28.2" width="50.300" height="9.600" fill="#0b0b0d"/><rect x="0" y="29" width="50" height="7.600" fill="url(#bk)"/><path d="M50.300 28.5V37.5H45L43.300 33L45 28.5Z" fill="#0e0f12"/><rect x="0" y="58.2" width="50.300" height="9.600" fill="#0b0b0d"/><rect x="0" y="59" width="50" height="7.600" fill="url(#bk)"/><path d="M50.300 58.5V67.5H45L43.300 63L45 58.5Z" fill="#0e0f12"/><rect x="0" y="78.2" width="50.300" height="9.600" fill="#0b0b0d"/><rect x="0" y="79" width="50" height="7.600" fill="url(#bk)"/><path d="M50.300 78.5V87.5H45L43.300 83L45 78.5Z" fill="#0e0f12"/><rect x="0" y="98.2" width="50.300" height="9.600" fill="#0b0b0d"/><rect x="0" y="99" width="50" height="7.600" fill="url(#bk)"/><path d="M50.300 98.5V107.5H45L43.300 103L45 98.5Z" fill="#0e0f12"/><rect x="0" y="128.2" width="50.300" height="9.600" fill="#0b0b0d"/><rect x="0" y="129" width="50" height="7.600" fill="url(#bk)"/><path d="M50.300 128.5V137.5H45L43.300 133L45 128.5Z" fill="#0e0f12"/><rect x="0" y="148.2" width="50.300" height="9.600" fill="#0b0b0d"/><rect x="0" y="149" width="50" height="7.600" fill="url(#bk)"/><path d="M50.300 148.5V157.5H45L43.300 153L45 148.5Z" fill="#0e0f12"/><rect x="0" y="178.2" width="50.300" height="9.600" fill="#0b0b0d"/><rect x="0" y="179" width="50" height="7.600" fill="url(#bk)"/><path d="M50.300 178.5V187.5H45L43.300 183L45 178.5Z" fill="#0e0f12"/><rect x="0" y="198.2" width="50.300" height="9.600" fill="#0b0b0d"/><rect x="0" y="199" width="50" height="7.600" fill="url(#bk)"/><path d="M50.300 198.5V207.5H45L43.300 203L45 198.5Z" fill="#0e0f12"/><rect x="0" y="218.2" width="50.300" height="9.600" fill="#0b0b0d"/><rect x="0" y="219" width="50" height="7.600" fill="url(#bk)"/><path d="M50.300 218.5V227.5H45L43.300 223L45 218.5Z" fill="#0e0f12"/><rect x="0" y="248.2" width="50.300" height="9.600" fill="#0b0b0d"/><rect x="0" y="249" width="50" height="7.600" fill="url(#bk)"/><path d="M50.300 248.5V257.5H45L43.300 253L45 248.5Z" fill="#0e0f12"/><rect x="0" y="268.2" width="50.300" height="9.600" fill="#0b0b0d"/><rect x="0" y="269" width="50" height="7.600" fill="url(#bk)"/><path d="M50.300 268.5V277.5H45L43.300 273L45 268.5Z" fill="#0e0f12"/><rect x="0" y="298.2" width="50.300" height="9.600" fill="#0b0b0d"/><rect x="0" y="299" width="50" height="7.600" fill="url(#bk)"/><path d="M50.300 298.5V307.5H45L43.300 303L45 298.5Z" fill="#0e0f12"/><rect x="0" y="318.2" width="50.300" height="9.600" fill="#0b0b0d"/><rect x="0" y="319" width="50" height="7.600" fill="url(#bk)"/><path d="M50.300 318.5V327.5H45L43.300 323L45 318.5Z" fill="#0e0f12"/><rect x="0" y="338.2" width="50.300" height="9.600" fill="#0b0b0d"/><rect x="0" y="339" width="50" height="7.600" fill="url(#bk)"/><path d="M50.300 338.5V347.5H45L43.300 343L45 338.5Z" fill="#0e0f12"/><rect x="0" y="368.2" width="50.300" height="9.600" fill="#0b0b0d"/><rect x="0" y="369" width="50" height="7.600" fill="url(#bk)"/><path d="M50.300 368.5V377.5H45L43.300 373L45 368.5Z" fill="#0e0f12"/><rect x="0" y="388.2" width="50.300" height="9.600" fill="#0b0b0d"/><rect x="0" y="389" width="50" height="7.600" fill="url(#bk)"/><path d="M50.300 388.5V397.5H45L43.300 393L45 388.5Z" fill="#0e0f12"/><rect x="0" y="418.2" width="50.300" height="9.600" fill="#0b0b0d"/><rect x="0" y="419" width="50" height="7.600" fill="url(#bk)"/><path d="M50.300 418.5V427.5H45L43.300 423L45 418.5Z" fill="#0e0f12"/><rect x="0" y="438.2" width="50.300" height="9.600" fill="#0b0b0d"/><rect x="0" y="439" width="50" height="7.600" fill="url(#bk)"/><path d="M50.300 438.5V447.5H45L43.300 443L45 438.5Z" fill="#0e0f12"/><rect x="0" y="458.2" width="50.300" height="9.600" fill="#0b0b0d"/><rect x="0" y="459" width="50" height="7.600" fill="url(#bk)"/><path d="M50.300 458.5V467.5H45L43.300 463L45 458.5Z" fill="#0e0f12"/><rect x="0" y="488.2" width="50.300" height="9.600" fill="#0b0b0d"/><rect x="0" y="489" width="50" height="7.600" fill="url(#bk)"/><path d="M50.300 488.5V497.5H45L43.300 493L45 488.5Z" fill="#0e0f12"/><rect x="0" y="508.2" width="50.300" height="9.600" fill="#0b0b0d"/><rect x="0" y="509" width="50" height="7.600" fill="url(#bk)"/><path d="M50.300 508.5V517.5H45L43.300 513L45 508.5Z" fill="#0e0f12"/><rect x="0" y="538.2" width="50.300" height="9.600" fill="#0b0b0d"/><rect x="0" y="539" width="50" height="7.600" fill="url(#bk)"/><path d="M50.300 538.5V547.5H45L43.300 543L45 538.5Z" fill="#0e0f12"/><rect x="0" y="558.2" width="50.300" height="9.600" fill="#0b0b0d"/><rect x="0" y="559" width="50" height="7.600" fill="url(#bk)"/><path d="M50.300 558.5V567.5H45L43.300 563L45 558.5Z" fill="#0e0f12"/><rect x="0" y="578.2" width="50.300" height="9.600" fill="#0b0b0d"/><rect x="0" y="579" width="50" height="7.600" fill="url(#bk)"/><path d="M50.300 578.5V587.5H45L43.300 583L45 578.5Z" fill="#0e0f12"/><rect x="0" y="608.2" width="50.300" height="9.600" fill="#0b0b0d"/><rect x="0" y="609" width="50" height="7.600" fill="url(#bk)"/><path d="M50.300 608.5V617.5H45L43.300 613L45 608.5Z" fill="#0e0f12"/><rect x="0" y="628.2" width="50.300" height="9.600" fill="#0b0b0d"/><rect x="0" y="629" width="50" height="7.600" fill="url(#bk)"/><path d="M50.300 628.5V637.5H45L43.300 633L45 628.5Z" fill="#0e0f12"/></svg><div class="t" style="left:586.2px;top:202.4px;font-size:10px;color:#1a1a1a;">C 5</div><div class="t" style="left:586.2px;top:322.4px;font-size:10px;color:#1a1a1a;">C 4</div><div class="t" style="left:586.2px;top:442.4px;font-size:10px;color:#1a1a1a;">C 3</div><div class="t" style="left:586.2px;top:562.4px;font-size:10px;color:#1a1a1a;">C 2</div><div class="t" style="left:586.2px;top:682.4px;font-size:10px;color:#1a1a1a;">C 1</div><div style="left:591px;top:803.8px;width:3px;height:1.2px;background:#303030;"></div><div style="left:596px;top:803.8px;width:4px;height:1.2px;background:#303030;"></div><div style="left:602px;top:168px;width:26px;height:637px;background:#34373d;"></div><svg style="left:628px;top:168px" width="933" height="637"><rect x="0" y="0" width="933" height="637" fill="#2a2d32"/><rect x="0" y="8" width="933" height="10" fill="#1f2023"/><rect x="0" y="28" width="933" height="10" fill="#1f2023"/><rect x="0" y="58" width="933" height="10" fill="#1f2023"/><rect x="0" y="78" width="933" height="10" fill="#1f2023"/><rect x="0" y="98" width="933" height="10" fill="#1f2023"/><rect x="0" y="128" width="933" height="10" fill="#1f2023"/><rect x="0" y="148" width="933" height="10" fill="#1f2023"/><rect x="0" y="118" width="933" height="1" fill="#222428"/><rect x="0" y="178" width="933" height="10" fill="#1f2023"/><rect x="0" y="198" width="933" height="10" fill="#1f2023"/><rect x="0" y="218" width="933" height="10" fill="#1f2023"/><rect x="0" y="248" width="933" height="10" fill="#1f2023"/><rect x="0" y="268" width="933" height="10" fill="#1f2023"/><rect x="0" y="238" width="933" height="1" fill="#222428"/><rect x="0" y="298" width="933" height="10" fill="#1f2023"/><rect x="0" y="318" width="933" height="10" fill="#1f2023"/><rect x="0" y="338" width="933" height="10" fill="#1f2023"/><rect x="0" y="368" width="933" height="10" fill="#1f2023"/><rect x="0" y="388" width="933" height="10" fill="#1f2023"/><rect x="0" y="358" width="933" height="1" fill="#222428"/><rect x="0" y="418" width="933" height="10" fill="#1f2023"/><rect x="0" y="438" width="933" height="10" fill="#1f2023"/><rect x="0" y="458" width="933" height="10" fill="#1f2023"/><rect x="0" y="488" width="933" height="10" fill="#1f2023"/><rect x="0" y="508" width="933" height="10" fill="#1f2023"/><rect x="0" y="478" width="933" height="1" fill="#222428"/><rect x="0" y="538" width="933" height="10" fill="#1f2023"/><rect x="0" y="558" width="933" height="10" fill="#1f2023"/><rect x="0" y="578" width="933" height="10" fill="#1f2023"/><rect x="0" y="608" width="933" height="10" fill="#1f2023"/><rect x="0" y="628" width="933" height="10" fill="#1f2023"/><rect x="0" y="598" width="933" height="1" fill="#222428"/><rect x="39" y="0" width="1" height="637" fill="#3d4046"/><rect x="78" y="0" width="1.3" height="637" fill="#50555c"/><rect x="117" y="0" width="1" height="637" fill="#3d4046"/><rect x="156" y="0" width="1" height="637" fill="#3d4046"/><rect x="194" y="0" width="1" height="637" fill="#3d4046"/><rect x="233" y="0" width="1.3" height="637" fill="#50555c"/><rect x="272" y="0" width="1" height="637" fill="#3d4046"/><rect x="311" y="0" width="1" height="637" fill="#3d4046"/><rect x="350" y="0" width="1" height="637" fill="#3d4046"/><rect x="389" y="0" width="1.3" height="637" fill="#50555c"/><rect x="428" y="0" width="1" height="637" fill="#3d4046"/><rect x="467" y="0" width="1" height="637" fill="#3d4046"/><rect x="505" y="0" width="1" height="637" fill="#3d4046"/><rect x="544" y="0" width="1.3" height="637" fill="#647484"/><rect x="583" y="0" width="1" height="637" fill="#3d4046"/><rect x="622" y="0" width="1" height="637" fill="#3d4046"/><rect x="661" y="0" width="1" height="637" fill="#3d4046"/><rect x="700" y="0" width="1.3" height="637" fill="#50555c"/><rect x="739" y="0" width="1" height="637" fill="#3d4046"/><rect x="778" y="0" width="1" height="637" fill="#3d4046"/><rect x="817" y="0" width="1" height="637" fill="#3d4046"/><rect x="855" y="0" width="1.3" height="637" fill="#50555c"/><rect x="894" y="0" width="1" height="637" fill="#3d4046"/><rect x="0" y="47.9" width="933" height="1.200" fill="#0e0f11"/><rect x="0" y="167.9" width="933" height="1.200" fill="#0e0f11"/><rect x="0" y="287.9" width="933" height="1.200" fill="#0e0f11"/><rect x="0" y="407.9" width="933" height="1.200" fill="#0e0f11"/><rect x="0" y="527.9" width="933" height="1.200" fill="#0e0f11"/></svg><div style="left:602px;top:216px;width:26px;height:1px;background:#1b1c20;"></div><div style="left:602px;top:336px;width:26px;height:1px;background:#1b1c20;"></div><div style="left:602px;top:456px;width:26px;height:1px;background:#1b1c20;"></div><div style="left:602px;top:576px;width:26px;height:1px;background:#1b1c20;"></div><div style="left:602px;top:696px;width:26px;height:1px;background:#1b1c20;"></div><div style="left:626.9px;top:168.6px;width:1.3px;height:636.4px;background:#e0e0e0;"></div><div style="left:822px;top:285.2px;width:156.3px;height:10.7px;background:#75674f;border:1px solid #7f8284;"><div style="right:1.300px;top:1.800px;width:29.7px;height:5px;background:#55483a"></div></div><div style="left:1172px;top:325.2px;width:273.3px;height:10.7px;background:#474aa8;border:1px solid #0c0c10;"><div style="right:1.300px;top:1.800px;width:51.9px;height:5px;background:#30337a"></div></div><div style="left:784px;top:345.2px;width:155.3px;height:10.7px;background:#734a6b;border:1px solid #80768a;"><div style="right:1.300px;top:1.800px;width:29.5px;height:5px;background:#57304f"></div></div><div style="left:861px;top:415.2px;width:195.3px;height:10.7px;background:#734a6b;border:1px solid #80768a;"><div style="right:1.300px;top:1.800px;width:37.1px;height:5px;background:#57304f"></div></div><div style="left:1172px;top:415.2px;width:195.3px;height:10.7px;background:#734a6b;border:1px solid #80768a;"><div style="right:1.300px;top:1.800px;width:37.1px;height:5px;background:#57304f"></div></div><div style="left:667px;top:445.2px;width:155.3px;height:10.7px;background:#474aa8;border:1px solid #0c0c10;"><div style="right:1.300px;top:1.800px;width:29.5px;height:5px;background:#30337a"></div></div><div style="left:1095px;top:475.2px;width:233.3px;height:10.7px;background:#474aa8;border:1px solid #0c0c10;"><div style="right:1.300px;top:1.800px;width:44.3px;height:5px;background:#30337a"></div></div><div style="left:784px;top:505.2px;width:155.3px;height:10.7px;background:#75674f;border:1px solid #7f8284;"><div style="right:1.300px;top:1.800px;width:29.5px;height:5px;background:#55483a"></div></div><div style="left:978px;top:525.2px;width:194.3px;height:10.7px;background:#734a6b;border:1px solid #80768a;"><div style="right:1.300px;top:1.800px;width:36.9px;height:5px;background:#57304f"></div></div><div style="left:822px;top:555.2px;width:156.3px;height:10.7px;background:#474aa8;border:1px solid #0c0c10;"><div style="right:1.300px;top:1.800px;width:29.7px;height:5px;background:#30337a"></div></div><div style="left:784px;top:595.2px;width:194.3px;height:10.7px;background:#75674f;border:1px solid #7f8284;"><div style="right:1.300px;top:1.800px;width:36.9px;height:5px;background:#55483a"></div></div><div style="left:667px;top:605.2px;width:155.3px;height:10.7px;background:#75674f;border:1px solid #7f8284;"><div style="right:1.300px;top:1.800px;width:29.5px;height:5px;background:#55483a"></div></div><div style="left:939px;top:645.2px;width:272.3px;height:10.7px;background:#474aa8;border:1px solid #0c0c10;"><div style="right:1.300px;top:1.800px;width:51.7px;height:5px;background:#30337a"></div></div><div style="left:1056px;top:655.2px;width:272.3px;height:10.7px;background:#734a6b;border:1px solid #80768a;"><div style="right:1.300px;top:1.800px;width:51.7px;height:5px;background:#57304f"></div></div><div style="left:1560px;top:168px;width:1.3px;height:637px;background:#17181b;"></div><div style="left:1561.3px;top:168px;width:5.7px;height:637px;background:#34373d;"></div><div style="left:1561px;top:216px;width:6px;height:1.2px;background:#1b1c20;"></div><div style="left:1561px;top:336px;width:6px;height:1.2px;background:#1b1c20;"></div><div style="left:1561px;top:456px;width:6px;height:1.2px;background:#1b1c20;"></div><div style="left:1561px;top:576px;width:6px;height:1.2px;background:#1b1c20;"></div><div style="left:1561px;top:696px;width:6px;height:1.2px;background:#1b1c20;"></div><div style="left:1567px;top:165.5px;width:20px;height:661.5px;background:#25272b;"></div><div style="left:1575px;top:370px;width:6px;height:297px;background:#666c75;"></div><svg style="left:1572px;top:173px" width="12" height="8"><path d="M0 7H11L5.500 0Z" fill="#565a62"/></svg><svg style="left:1572.300px;top:789px" width="12" height="8"><path d="M0 0H11L5.500 7.200Z" fill="#5a5e66"/></svg><div style="left:1383.8px;top:184.8px;width:52px;height:26px;background:#f4f8f8;border-right:1px solid #b8bcbc;border-bottom:1px solid #a8acac;"></div><div style="left:1386.9px;top:187.9px;width:46px;height:20.1px;background:#ff0000;overflow:hidden;"><div class="t" style="left:-3.200px;top:0px;font-size:20px;font-weight:bold;color:#101010;letter-spacing:-0.200px;">18:15</div></div><div style="left:523px;top:805px;width:1064px;height:22px;background:#25272b;"></div><div style="left:523px;top:805px;width:1064px;height:1px;background:#15161a;"></div><div style="left:606px;top:806px;width:21px;height:20px;background:#2c2e33;"></div><div class="t" style="left:609.6px;top:809px;font-size:14px;color:#e0e0e0;letter-spacing:0.110px;font-weight:bold;">...</div><div style="left:628px;top:806px;width:59px;height:20px;background:#363a41;"></div><div class="t" style="left:634px;top:810.1px;font-size:13.4px;color:#ffffff;letter-spacing:0.010px;">Velocity</div><div style="left:689px;top:806px;width:76px;height:20px;background:#2c2e34;"></div><div class="t" style="left:694.3px;top:810.1px;font-size:13.4px;color:#7f838a;letter-spacing:-0.255px;">Modulation</div><div style="left:767px;top:806px;width:75px;height:20px;background:#2c2e34;"></div><div class="t" style="left:773px;top:810.1px;font-size:13.4px;color:#7f838a;letter-spacing:-0.081px;">Pitch Bend</div><div style="left:844px;top:806px;width:80px;height:20px;background:#2c2e34;"></div><div class="t" style="left:850px;top:810.1px;font-size:13.4px;color:#7f838a;letter-spacing:-0.115px;">After Touch</div><div style="left:523px;top:825.7px;width:1064px;height:1.3px;background:#15161a;"></div><div style="left:525px;top:827px;width:77px;height:25px;background:#6b7079;"></div><div class="t" style="left:572.2px;top:828.6px;font-size:11px;color:#1c1c1c;">127</div><div style="left:598.3px;top:831px;width:4px;height:1px;background:#2a2a2a;"></div><div style="left:598.3px;top:836px;width:4px;height:1px;background:#2a2a2a;"></div><div style="left:598.3px;top:841px;width:4px;height:1px;background:#2a2a2a;"></div><div style="left:598.3px;top:846px;width:4px;height:1px;background:#2a2a2a;"></div><div style="left:598.3px;top:851px;width:4px;height:1px;background:#2a2a2a;"></div><div style="left:602px;top:827px;width:26px;height:25px;background:#34373d;"></div><svg style="left:628px;top:827px" width="959" height="25"><rect x="0" y="0" width="959" height="25" fill="#2a2d32"/><rect x="39" y="0" width="1" height="25" fill="#3d4046"/><rect x="78" y="0" width="1.3" height="25" fill="#50555c"/><rect x="117" y="0" width="1" height="25" fill="#3d4046"/><rect x="156" y="0" width="1" height="25" fill="#3d4046"/><rect x="194" y="0" width="1" height="25" fill="#3d4046"/><rect x="233" y="0" width="1.3" height="25" fill="#50555c"/><rect x="272" y="0" width="1" height="25" fill="#3d4046"/><rect x="311" y="0" width="1" height="25" fill="#3d4046"/><rect x="350" y="0" width="1" height="25" fill="#3d4046"/><rect x="389" y="0" width="1.3" height="25" fill="#50555c"/><rect x="428" y="0" width="1" height="25" fill="#3d4046"/><rect x="467" y="0" width="1" height="25" fill="#3d4046"/><rect x="505" y="0" width="1" height="25" fill="#3d4046"/><rect x="544" y="0" width="1.3" height="25" fill="#647484"/><rect x="583" y="0" width="1" height="25" fill="#3d4046"/><rect x="622" y="0" width="1" height="25" fill="#3d4046"/><rect x="661" y="0" width="1" height="25" fill="#3d4046"/><rect x="700" y="0" width="1.3" height="25" fill="#50555c"/><rect x="739" y="0" width="1" height="25" fill="#3d4046"/><rect x="778" y="0" width="1" height="25" fill="#3d4046"/><rect x="817" y="0" width="1" height="25" fill="#3d4046"/><rect x="855" y="0" width="1.3" height="25" fill="#50555c"/><rect x="894" y="0" width="1" height="25" fill="#3d4046"/><rect x="933" y="0" width="1" height="25" fill="#3d4046"/></svg><div style="left:1560px;top:827px;width:1.3px;height:25px;background:#17181b;"></div><div style="left:1561.3px;top:827px;width:25.7px;height:25px;background:#34373d;"></div><div style="left:626.9px;top:827px;width:1.3px;height:25px;background:#e0e0e0;"></div><div style="left:666px;top:841.7px;width:5px;height:11px;background:#474aa8;border:1px solid #0c0c10;border-bottom:none;"></div><div style="left:783px;top:841.7px;width:5px;height:11px;background:#734a6b;border:1px solid #80768a;border-bottom:none;"></div><div style="left:821px;top:841.7px;width:5px;height:11px;background:#474aa8;border:1px solid #0c0c10;border-bottom:none;"></div><div style="left:860px;top:841.7px;width:5px;height:11px;background:#734a6b;border:1px solid #80768a;border-bottom:none;"></div><div style="left:938px;top:841.7px;width:5px;height:11px;background:#474aa8;border:1px solid #0c0c10;border-bottom:none;"></div><div style="left:977px;top:841.7px;width:5px;height:11px;background:#734a6b;border:1px solid #80768a;border-bottom:none;"></div><div style="left:1055px;top:841.7px;width:5px;height:11px;background:#734a6b;border:1px solid #80768a;border-bottom:none;"></div><div style="left:1094px;top:841.7px;width:5px;height:11px;background:#474aa8;border:1px solid #0c0c10;border-bottom:none;"></div><div style="left:1171px;top:841.7px;width:5px;height:11px;background:#474aa8;border:1px solid #0c0c10;border-bottom:none;"></div><div style="left:1587px;top:127px;width:1px;height:725px;background:#4a4e56;"></div>
</body></html>
